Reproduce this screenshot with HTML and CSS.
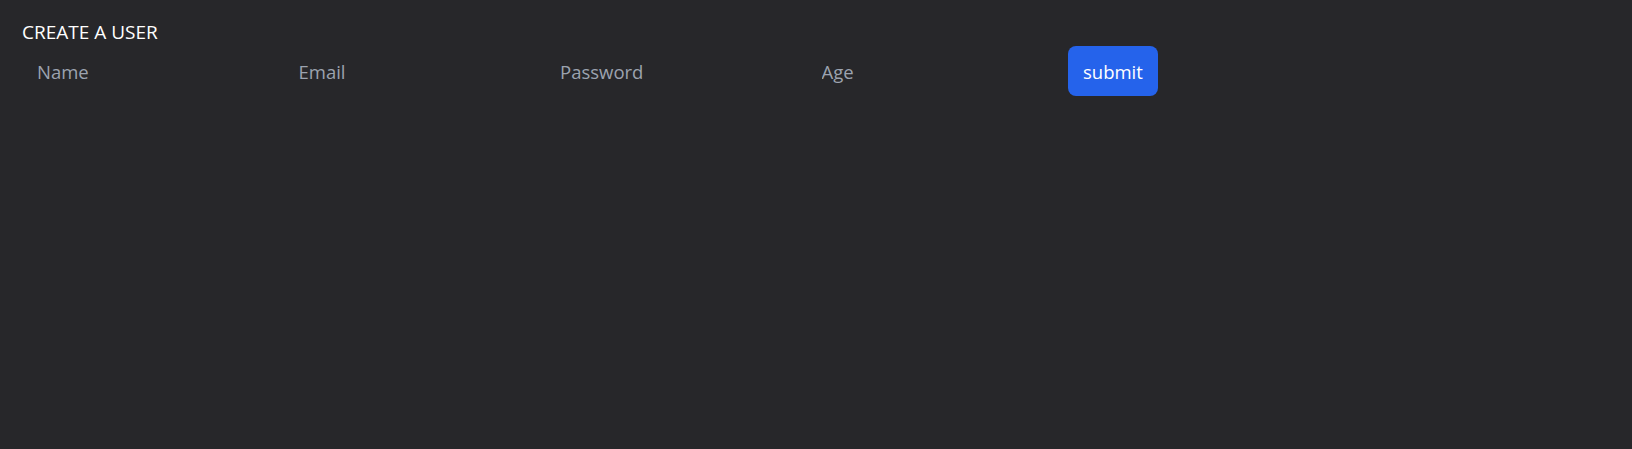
FILE: index.html
```html
<!DOCTYPE html>
<html lang="en">
<head>
<meta charset="utf-8">
<title>Create a user</title>
<link rel="stylesheet" href="styles.css">
</head>
<body>
<main class="page">
  <h1 class="title">CREATE A USER</h1>
  <form class="user-form">
    <input class="field" type="text" placeholder="Name">
    <input class="field" type="email" placeholder="Email">
    <input class="field" type="password" placeholder="Password">
    <input class="field" type="number" placeholder="Age">
    <button class="submit" type="submit">submit</button>
  </form>
</main>
</body>
</html>
```

FILE: styles.css
```css
html, body {
  margin: 0;
  height: 100%;
  background: #27272a;
}

body {
  font-family: "Open Sans", "Noto Sans", sans-serif;
  color: #ffffff;
}

.page {
  padding: 18px 22px;
}

.title {
  margin: 0;
  font-size: 19px;
  font-weight: 400;
  line-height: 28px;
  color: #ffffff;
}

.user-form {
  display: flex;
  align-items: center;
  height: 50px;
}

.field {
  width: 261.5px;
  height: 50px;
  box-sizing: border-box;
  padding: 0 15px;
  border: none;
  outline: none;
  background: transparent;
  color: #e5e7eb;
  font-family: inherit;
  font-size: 18.5px;
  -moz-appearance: textfield;
}

.field::-webkit-outer-spin-button,
.field::-webkit-inner-spin-button {
  -webkit-appearance: none;
  margin: 0;
}

.field::placeholder {
  color: #9ca3af;
}

.submit {
  margin-left: 0;
  height: 50px;
  padding: 0 15px;
  border: none;
  border-radius: 8px;
  background: #2563eb;
  color: #ffffff;
  font-family: inherit;
  font-size: 18.5px;
  cursor: pointer;
}
```
